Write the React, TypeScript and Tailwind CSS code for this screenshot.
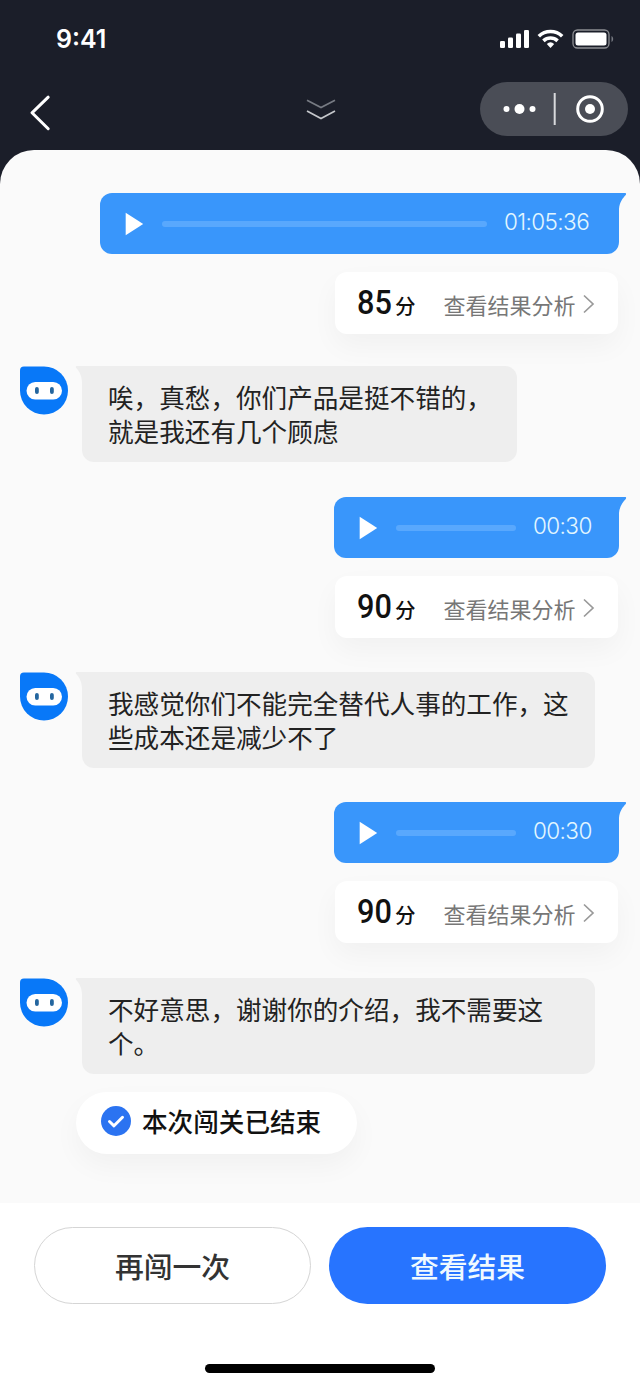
import * as React from "react"
import clsx from "clsx"

type Message =
  | { type: "voice"; duration: string; score: number; long?: boolean; gap: string }
  | { type: "bot"; lines: string[]; narrow?: boolean; gap: string }

const messages: Message[] = [
  { type: "voice", duration: "01:05:36", score: 85, long: true, gap: "mb-8" },
  { type: "bot", lines: ["唉，真愁，你们产品是挺不错的，", "就是我还有几个顾虑"], narrow: true, gap: "mb-[35px]" },
  { type: "voice", duration: "00:30", score: 90, gap: "mb-[34px]" },
  { type: "bot", lines: ["我感觉你们不能完全替代人事的工作，这", "些成本还是减少不了"], gap: "mb-[34px]" },
  { type: "voice", duration: "00:30", score: 90, gap: "mb-[35px]" },
  { type: "bot", lines: ["不好意思，谢谢你的介绍，我不需要这", "个。"], gap: "mb-[18px]" },
]

function StatusBar() {
  return (
    <div className="flex h-[78px] items-center justify-between pl-14 pr-[26px]">
      <span className="font-['Inter',sans-serif] text-[25px] leading-none font-semibold text-white">9:41</span>
      <svg width="114" height="22" viewBox="0 0 114 22" fill="white">
        <rect x="0" y="13" width="5" height="7" rx="1.3" />
        <rect x="8" y="9.500" width="5" height="10.500" rx="1.3" />
        <rect x="16" y="5.500" width="5" height="14.500" rx="1.3" />
        <rect x="24" y="2" width="5" height="18" rx="1.3" />
        <g fill="none" stroke="white" strokeWidth="3.600">
          <path d="M38.800 8.200a17 17 0 0 1 23.400 0" />
          <path d="M43.400 12.800a10.500 10.500 0 0 1 14.200 0" />
        </g>
        <path d="M46.800 15.900a5.600 5.600 0 0 1 7.400 0L50.500 20z" />
        <rect x="73" y="2" width="36" height="18" rx="4.500" fill="none" stroke="#8d8e93" strokeWidth="1.300" />
        <rect x="75.500" y="4.500" width="31" height="13" rx="2.500" />
        <path d="M111.500 8v6c2.200-1 2.200-5 0-6z" fill="#777a82" />
      </svg>
    </div>
  )
}

function NavBar() {
  return (
    <div className="flex h-[72px] items-start justify-between pl-[29px] pr-3 pt-1">
      <svg className="mt-3" width="24" height="38" viewBox="0 0 24 38" fill="none" stroke="white" strokeWidth="3" strokeLinecap="round" strokeLinejoin="round">
        <path d="M19.200 3.200L3 18.800L19.200 34.700" />
      </svg>
      <svg className="ml-[109px] mt-4" width="30" height="24" viewBox="0 0 30 24" fill="none" strokeWidth="1.700">
        <path d="M1 2.200L15 9.500L29 2.200" stroke="#777b83" />
        <path d="M1 13L15 20.500L29 13" stroke="#c5c7cb" />
      </svg>
      <div className="flex h-[54px] w-[148px] items-center rounded-full bg-[#4a4d56]">
        <svg width="148" height="54" viewBox="0 0 148 54" fill="white">
          <circle cx="26.500" cy="27" r="3" />
          <circle cx="39.500" cy="27" r="5" />
          <circle cx="52.500" cy="27" r="3" />
          <rect x="73.700" y="11" width="2" height="32" fill="#d8d9dc" />
          <circle cx="110" cy="27" r="12.300" fill="none" stroke="white" strokeWidth="3" />
          <circle cx="110" cy="27" r="5" />
        </svg>
      </div>
    </div>
  )
}

function VoiceMessage({ duration, score, long }: { duration: string; score: number; long?: boolean }) {
  return (
    <div className="flex flex-col items-end pr-[21px]">
      <div
        className={clsx(
          "relative flex h-[61px] items-center rounded-[12px] rounded-tr-none bg-[#3996fb] pl-[25px] pr-[27px]",
          long ? "w-[519px]" : "w-[285px]",
        )}
      >
        <svg width="20" height="24" viewBox="0 0 20 24" fill="white">
          <path d="M.7.800v22.400L18.200 12z" />
        </svg>
        <div className="ml-[17px] mr-[17px] h-[6px] flex-1 rounded-full bg-[#59a8fd]" />
        <span
          className={clsx(
            "whitespace-nowrap pb-0.5 font-['Inter',sans-serif] text-[22.500px] leading-none font-light tracking-[-0.6px] text-[#e3f6ff]",
            long ? "w-[88px]" : "w-[59px]",
          )}
        >
          {duration}
        </span>
        {/* Bubble tail */}
        <svg className="absolute -right-2 top-0" width="9" height="16" viewBox="0 0 9 16" fill="#3996fb">
          <path d="M0 0H7.500Q8.600.4 7.800 2C5 4.800 1.600 9 1 16H0z" />
        </svg>
      </div>
      <div className="mr-px mt-[18px] flex h-[62px] w-[283px] items-center rounded-[12px] bg-white pl-[22px] shadow-[0_12px_28px_rgba(0,0,0,0.04)]">
        <span className="mb-0.5 w-[36px] origin-left scale-x-93 font-['Roboto',sans-serif] text-[33px] leading-none font-medium text-[#111]">
          {score}
        </span>
        <span className="ml-0.5 mt-1 text-[20.500px] leading-none font-medium text-[#111]">分</span>
        <span className="ml-[28px] mt-0.5 text-[22px] leading-none text-[#777]">查看结果分析</span>
        <svg className="ml-1.5 mt-0.5" width="14" height="20" viewBox="0 0 14 20" fill="none" stroke="#999" strokeWidth="1.700">
          <path d="M2 1.500L11 10L2 18.500" />
        </svg>
      </div>
    </div>
  )
}

function BotAvatar() {
  return (
    <svg className="shrink-0" width="48" height="49" viewBox="0 0 48 49">
      <path d="M4 .5H24A24 24 0 1 1 0 24.500V4.500Q0 .5 4 .5z" fill="#0878f8" />
      <rect x="6.500" y="16" width="35.500" height="17.500" rx="8.750" fill="white" />
      <rect x="15" y="21" width="3.800" height="7" rx="1.900" fill="#24669f" />
      <rect x="30" y="21" width="3.800" height="7" rx="1.900" fill="#24669f" />
    </svg>
  )
}

function BotMessage({ lines, narrow }: { lines: string[]; narrow?: boolean }) {
  return (
    <div className="flex h-24 pl-5">
      <BotAvatar />
      <div
        className={clsx(
          "relative ml-3.5 h-24 rounded-[12px] rounded-tl-none bg-[#eee] pl-[26px] pt-[14px] text-[25.6px] leading-[34px] whitespace-nowrap text-[#222]",
          narrow ? "w-[435px]" : "w-[513px]",
        )}
      >
        <svg className="absolute -left-[7px] top-0" width="8" height="16" viewBox="0 0 8 16" fill="#eee">
          <path d="M8 0H1.500Q0 .5 1.200 2C4 4.800 6.600 9 7 16H8z" />
        </svg>
        {lines.map((line) => (
          <p key={line}>{line}</p>
        ))}
      </div>
    </div>
  )
}

export default function App() {
  return (
    <div className="flex h-[1386px] w-[640px] flex-col overflow-hidden bg-[#1b1e29] font-['Noto_Sans_CJK_SC',sans-serif]">
      <StatusBar />
      <NavBar />

      <main className="flex h-[1053px] shrink-0 flex-col rounded-t-[34px] bg-[#fafafa] pt-[43px]">
        {messages.map((message, i) => (
          <div key={i} className={message.gap}>
            {message.type === "voice" ? (
              <VoiceMessage duration={message.duration} score={message.score} long={message.long} />
            ) : (
              <BotMessage lines={message.lines} narrow={message.narrow} />
            )}
          </div>
        ))}

        {/* Session finished */}
        <div className="ml-[76px] flex h-[62px] w-[281px] shrink-0 items-center rounded-full bg-white pb-1 pl-[25px] shadow-[0_12px_28px_rgba(0,0,0,0.04)]">
          <svg width="30" height="30" viewBox="0 0 30 30" fill="none">
            <circle cx="15" cy="15" r="15" fill="#2b73f1" />
            <path d="M8.500 15.500L13 19.800L21.500 11.300" stroke="white" strokeWidth="3" strokeLinecap="round" strokeLinejoin="round" />
          </svg>
          <span className="ml-[11px] text-[25.6px] leading-none font-medium text-[#111]">本次闯关已结束</span>
        </div>
      </main>

      <footer className="flex flex-1 flex-col items-center bg-white pt-6">
        <div className="flex gap-[18px]">
          <button className="h-[77px] w-[277px] rounded-full border border-[#d5d5d5] pt-0.5 text-[28.8px] leading-none font-medium text-[#333]">
            再闯一次
          </button>
          <button className="h-[77px] w-[277px] rounded-full bg-[#2774ff] pt-0.5 text-[28.8px] leading-none font-medium text-[#f0faff]">
            查看结果
          </button>
        </div>
        <div className="mt-[60px] h-[9px] w-[230px] rounded-full bg-black" />
      </footer>
    </div>
  )
}
